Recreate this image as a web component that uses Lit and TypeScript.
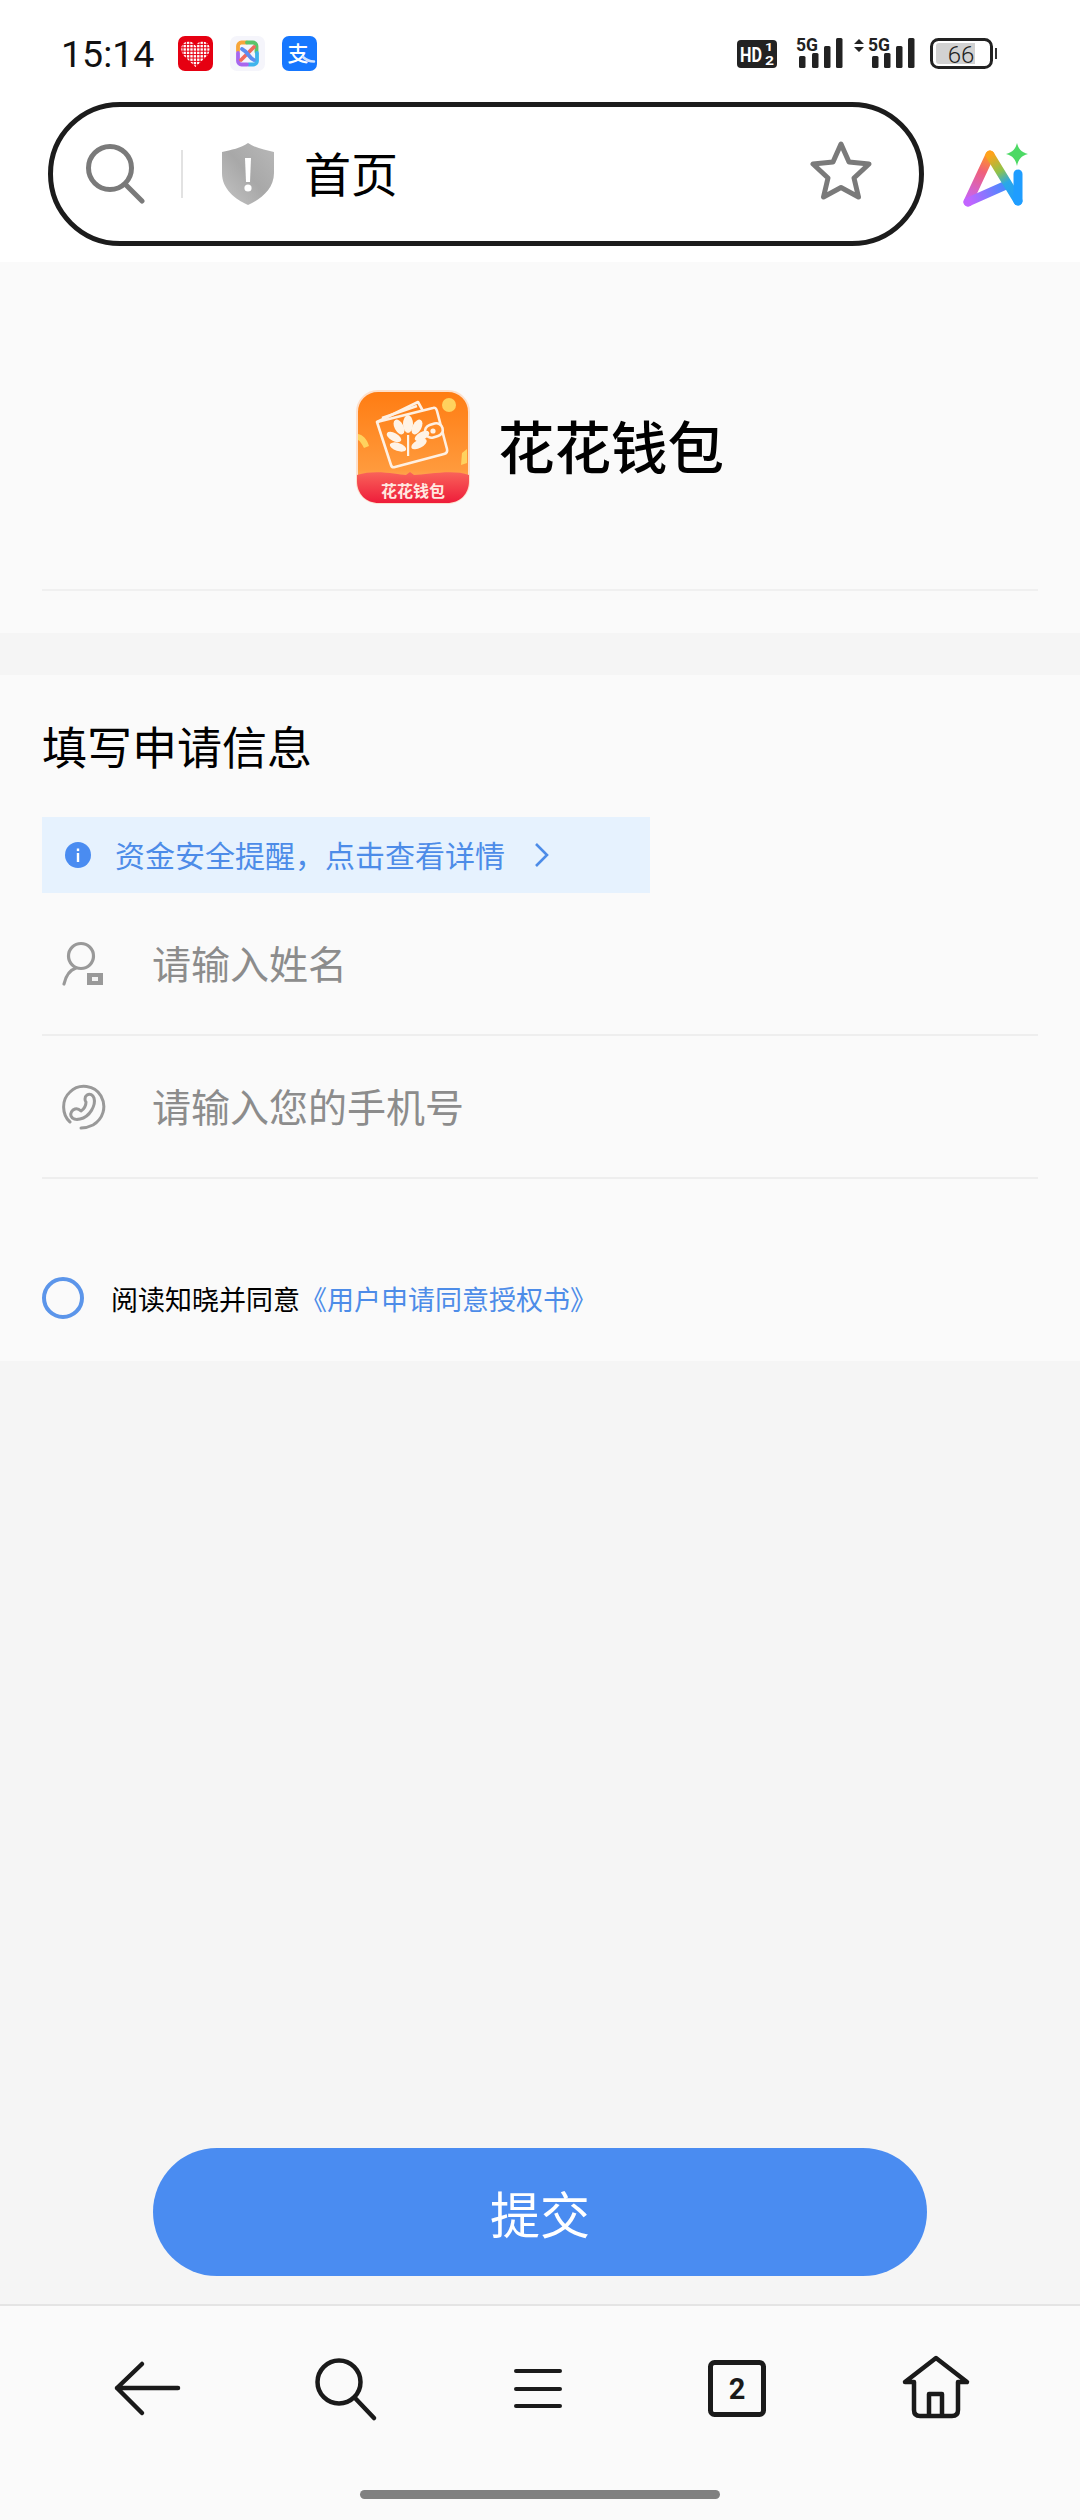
import { LitElement, html, css, svg } from "lit";
import { customElement } from "lit/decorators.js";

const bar = (x: number, top: number, w = 6.5) =>
  svg`<rect x=${x} y=${top} width=${w} height=${34 - top} rx="1.5" fill="#222"/>`;

const heartGrid = () => {
  const out = [];
  for (let v = 5; v < 33; v += 3.4) {
    out.push(svg`<path d="M${v} 4 V32" stroke="#e60012" stroke-width="1"/>`);
    out.push(svg`<path d="M3 ${v} H33" stroke="#e60012" stroke-width="1"/>`);
  }
  return out;
};

@customElement("app-root")
export class AppRoot extends LitElement {
  static styles = css`
    :host { display: block; width: 1080px; height: 2520px; font-family: "Noto Sans CJK SC", Roboto, sans-serif; background: #f5f5f5; color: #000; }
    .page { display: flex; flex-direction: column; height: 2520px; }
    svg { display: block; flex: none; }

    .status { height: 102px; background: #fff; display: flex; padding: 34px 83px 0 61px; box-sizing: border-box; }
    .time { font: 400 37.5px/40px Roboto, sans-serif; width: 117px; color: #111; }
    .apps { display: flex; gap: 17px; align-items: flex-start; margin-top: 2px; }
    .right { margin-left: auto; }

    .toolbar { height: 160px; background: #fff; display: flex; padding-left: 48px; box-sizing: border-box; }
    .pill { width: 876px; height: 144px; box-sizing: border-box; border: 5px solid #1c1c1c; border-radius: 72px; display: flex; align-items: center; padding-left: 32px; }
    .search { margin-bottom: 3px; }
    .divider { width: 2px; height: 48px; background: #e2e2e2; margin: 0 38px 0 36px; }
    .url { font-size: 47px; line-height: 60px; margin-left: 29px; padding-bottom: 5px; flex: 1; color: #000; }
    .star { margin: 0 47px 6px 0; }
    .ai { margin: 41px 0 0 39px; }

    .head { background: #fafafa; height: 371px; box-sizing: border-box; padding: 128px 42px 0; }
    .brand { display: flex; justify-content: center; align-items: center; gap: 28px; height: 114px; padding-bottom: 85px; border-bottom: 2px solid #f0f0f0; }
    .brand-name { font-size: 56.5px; font-weight: 500; line-height: 70px; padding-bottom: 6px; }

    .form { margin-top: 42px; background: #fafafa; height: 686px; box-sizing: border-box; padding: 40px 42px 0; }
    .form-title { font-size: 45px; line-height: 62px; font-weight: 400; margin: 0; }
    .notice { margin-top: 40px; width: 608px; height: 76px; box-sizing: border-box; background: #e6f2fe; display: flex; align-items: center; padding-left: 23px; color: #4d8ce8; font-size: 30px; }
    .notice span { margin-left: 24px; width: 419px; padding-bottom: 2px; white-space: nowrap; }
    .row { height: 143px; box-sizing: border-box; border-bottom: 2px solid #eeeeee; display: flex; align-items: center; padding-left: 20px; color: #8c8c8c; font-size: 39px; }
    .row span { margin-left: 46px; padding-bottom: 3px; }
    .agree { display: flex; align-items: center; margin-top: 98px; font-size: 27px; line-height: 41px; }
    .radio { width: 42px; height: 42px; box-sizing: border-box; border: 4px solid #5b95ea; border-radius: 50%; margin-right: 27px; }
    .link { color: #4d8ce8; }

    .spacer { flex: 1; }
    .submit { align-self: center; width: 774px; height: 128px; margin: 0 0 28px; border: none; border-radius: 64px; background: #4a8cf1; color: #fff; font: 400 50px "Noto Sans CJK SC", sans-serif; }

    .nav { height: 216px; box-sizing: border-box; background: #fafafa; border-top: 2px solid #e4e4e4; position: relative; }
    .nav-row { display: grid; grid-template-columns: repeat(5, 197.5px); padding: 42px 0 0 49.5px; }
    .nav-row svg { justify-self: center; }
    .handle { position: absolute; left: 360px; bottom: 21px; width: 360px; height: 9px; border-radius: 5px; background: #808080; }
  `;

  render() {
    return html`<div class="page">
      <div class="status">
        <div class="time">15:14</div>
        <div class="apps">
          <svg width="35" height="35" viewBox="0 0 35 35">
            <rect width="35" height="35" rx="7" fill="#e60012"/>
            <path d="M17.5 31 L6 20 C1 14 3 5.500 10.500 5.500 C14 5.500 16 7.500 17.5 10 C19 7.500 21 5.500 24.500 5.500 C32 5.500 34 14 29 20 Z" fill="#fff"/>
            ${heartGrid()}
          </svg>
          <svg width="35" height="35" viewBox="0 0 35 35">
            <rect width="35" height="35" rx="7" fill="#f5f5fb"/>
            <g fill="none" stroke-width="3.800" stroke-linecap="round">
              <path d="M8 15 V10 a3.500 3.500 0 0 1 3.500-3.500 h5" stroke="#f7a63a"/>
              <path d="M17 6.500 h6 a3.500 3.500 0 0 1 3.500 3.500 v6" stroke="#5ac46a"/>
              <path d="M27 17 v8 a3.500 3.500 0 0 1 -3.500 3.500 h-5" stroke="#3fb4ec"/>
              <path d="M17 28.500 h-5.500 a3.500 3.500 0 0 1 -3.500-3.500 v-8" stroke="#a866ee"/>
              <path d="M11 24 L24 11" stroke="#ef6b5d"/>
              <path d="M12 13 C18 16 19 22 24 24" stroke="#5c8df0"/>
            </g>
          </svg>
          <svg width="35" height="35" viewBox="0 0 35 35">
            <rect width="35" height="35" rx="7" fill="#1677ff"/>
            <text x="16" y="25" text-anchor="middle" font-size="21" font-weight="500" fill="#fff" font-family="Noto Sans CJK SC">支</text>
            <path d="M21 21 C24 24 28 25.500 32 25.500" fill="none" stroke="#cfe2ff" stroke-width="2.500" stroke-linecap="round"/>
          </svg>
        </div>
        <svg class="right" width="260" height="36" viewBox="0 0 260 36" font-family="Roboto, sans-serif">
          <rect x="0" y="6" width="40" height="28" rx="4" fill="#222"/>
          <text x="3" y="27.500" font-size="21" font-weight="700" fill="#fff" textLength="22" lengthAdjust="spacingAndGlyphs">HD</text>
          <text x="28" y="17" font-size="11" font-weight="700" fill="#fff" textLength="8" lengthAdjust="spacingAndGlyphs">1</text>
          <text x="28" y="30.500" font-size="12" font-weight="700" fill="#fff" textLength="9" lengthAdjust="spacingAndGlyphs">2</text>
          <text x="59" y="17" font-size="19" font-weight="700" fill="#222" textLength="22" lengthAdjust="spacingAndGlyphs">5G</text>
          ${bar(62, 22)}${bar(75, 19)}${bar(87, 12)}${bar(99, 4)}
          <path d="M117 10 L122 5 L127 10 Z M117 13 L122 18 L127 13 Z" fill="#222"/>
          <text x="131" y="17" font-size="19" font-weight="700" fill="#222" textLength="22" lengthAdjust="spacingAndGlyphs">5G</text>
          ${bar(135, 22)}${bar(147, 19)}${bar(159, 12)}${bar(171, 4)}
          <rect x="194.500" y="5.500" width="60" height="28" rx="7" fill="#fff" stroke="#222" stroke-width="3"/>
          <path d="M199 12 a3 3 0 0 1 3-3 H238 V30 H202 a3 3 0 0 1 -3-3 Z" fill="#d2d2d2"/>
          <text x="224" y="28.500" text-anchor="middle" font-size="24" font-weight="300" fill="#222">66</text>
          <rect x="258" y="14" width="2.500" height="11" fill="#333"/>
        </svg>
      </div>

      <div class="toolbar">
        <div class="pill">
          <svg class="search" width="60" height="62" viewBox="0 0 60 62" fill="none" stroke="#7a7a7a" stroke-width="5" stroke-linecap="round">
            <circle cx="25" cy="26" r="21.500"/>
            <path d="M41 43 L57 59"/>
          </svg>
          <div class="divider"></div>
          <svg width="54" height="62" viewBox="0 0 54 62">
            <defs>
              <linearGradient id="sh" x1="0" y1="1" x2="1" y2="0">
                <stop offset="0" stop-color="#c4c4c4"/><stop offset="0.5" stop-color="#a8a8a8"/><stop offset="1" stop-color="#b8b8b8"/>
              </linearGradient>
            </defs>
            <path d="M27 0 C34 5 44 7 53 9 V30 C53 46 40 56 27 62 C14 56 1 46 1 30 V9 C10 7 20 5 27 0 Z" fill="url(#sh)"/>
            <path d="M24 15 h6 l-1 24 h-4 Z" fill="#fff"/>
            <circle cx="27" cy="45" r="3.600" fill="#fff"/>
          </svg>
          <div class="url">首页</div>
          <svg class="star" width="62" height="60" viewBox="0 0 62 60" fill="none" stroke="#7a7a7a" stroke-width="5" stroke-linejoin="round">
            <path d="M31 3 L39 21 L59 23 L44 37 L48.500 56 L31 46.500 L13.500 56 L18 37 L3 23 L23 21 Z"/>
          </svg>
        </div>
        <svg class="ai" width="68" height="68" viewBox="0 0 68 68" fill="none" stroke-width="9" stroke-linecap="round" stroke-linejoin="round">
          <defs>
            <linearGradient id="a1" gradientUnits="userSpaceOnUse" x1="27" y1="12" x2="5" y2="60">
              <stop offset="0" stop-color="#ff9a1f"/><stop offset="0.35" stop-color="#f0607a"/><stop offset="1" stop-color="#c264ff"/>
            </linearGradient>
            <linearGradient id="a2" gradientUnits="userSpaceOnUse" x1="6" y1="58" x2="44" y2="42">
              <stop offset="0" stop-color="#c264ff"/><stop offset="1" stop-color="#3f8cff"/>
            </linearGradient>
            <linearGradient id="a3" gradientUnits="userSpaceOnUse" x1="27" y1="12" x2="55" y2="58">
              <stop offset="0" stop-color="#ffa31a"/><stop offset="0.35" stop-color="#8fc34a"/><stop offset="0.6" stop-color="#2aa8e8"/><stop offset="1" stop-color="#1f9dff"/>
            </linearGradient>
          </defs>
          <path d="M27 12 L5 59" stroke="url(#a1)"/>
          <path d="M5 59 L41 43" stroke="url(#a2)"/>
          <path d="M27 12 L55 58" stroke="url(#a3)"/>
          <path d="M55 31 V58" stroke="#1f9dff"/>
          <path d="M54 0 C55.500 6 58 9 65 11 C58 13 55.500 16 54 23 C52.500 16 50 13 43 11 C50 9 52.500 6 54 0 Z" fill="#4cd964" stroke="none"/>
        </svg>
      </div>

      <div class="head">
        <div class="brand">
          <svg width="114" height="114" viewBox="-1 -1 114 114">
            <defs>
              <linearGradient id="lo" x1="0" y1="0" x2="0" y2="1">
                <stop offset="0" stop-color="#ff7c12"/><stop offset="0.7" stop-color="#ff9a3c"/><stop offset="1" stop-color="#ffc79a"/>
              </linearGradient>
              <linearGradient id="lr" x1="0" y1="0" x2="0" y2="1">
                <stop offset="0" stop-color="#f9635a"/><stop offset="1" stop-color="#ee1c3a"/>
              </linearGradient>
            </defs>
            <rect x="0" y="0" width="112" height="112" rx="21" fill="url(#lo)" stroke="#fde0cc" stroke-width="2"/>
            <path d="M0 84 C20 78 40 84 49 84 L53 81 L57 84 C70 84 95 78 112 84 V90 C112 103 103 112 90 112 H22 C9 112 0 103 0 90 Z" fill="url(#lr)"/>
            <circle cx="92" cy="14" r="7" fill="#ffd25e"/>
            <path d="M1 43 C6 44 10 48 12 55 L7 57 C5 53 3 50 1 49 Z" fill="#ffd25e"/>
            <path d="M110 58 L105 62 L104 74 L110 72 Z" fill="#ffd25e"/>
            <g fill="none" stroke="#fff0e2" stroke-width="2.600" stroke-linejoin="round">
              <path d="M20 31 L76 17 Q79 16 80 20 L90 58 Q91 62 87 63 L38 76 Q35 77 34 74 L20 31 Z"/>
              <path d="M20 31 L61 11 L66 20"/>
              <path d="M25 27 L60 15"/>
              <rect x="68" y="33" width="18" height="13" rx="6.500" transform="rotate(-16 77 40)" fill="#ff8a24"/>
            </g>
            <circle cx="76" cy="40" r="2.600" fill="#fff0e2"/>
            <g fill="#fff3e6">
              <ellipse cx="51" cy="33" rx="5" ry="9"/>
              <ellipse cx="42" cy="36" rx="4.500" ry="8" transform="rotate(-28 42 36)"/>
              <ellipse cx="60" cy="36" rx="4.500" ry="8" transform="rotate(28 60 36)"/>
              <ellipse cx="37" cy="46" rx="4" ry="8" transform="rotate(-62 37 46)"/>
              <ellipse cx="65" cy="45" rx="4" ry="8" transform="rotate(62 65 45)"/>
              <ellipse cx="41" cy="56" rx="4" ry="8.500" transform="rotate(-72 41 56)"/>
              <ellipse cx="62" cy="53" rx="4" ry="8.500" transform="rotate(62 62 53)"/>
              <rect x="50" y="44" width="2.200" height="21"/>
            </g>
            <text x="56" y="106" text-anchor="middle" font-size="16" font-weight="700" fill="#ffe9e0" font-family="Noto Sans CJK SC">花花钱包</text>
          </svg>
          <div class="brand-name">花花钱包</div>
        </div>
      </div>

      <div class="form">
        <h2 class="form-title">填写申请信息</h2>
        <div class="notice">
          <svg width="26" height="26" viewBox="0 0 26 26">
            <circle cx="13" cy="13" r="13" fill="#4a8cf1"/>
            <rect x="11.800" y="11" width="2.400" height="9" fill="#fff"/>
            <rect x="11.800" y="6.500" width="2.400" height="2.600" fill="#fff"/>
          </svg>
          <span>资金安全提醒，点击查看详情</span>
          <svg width="16" height="26" viewBox="0 0 16 26" fill="none" stroke="#4d8ce8" stroke-width="2.600">
            <path d="M2 2 L13 13 L2 24"/>
          </svg>
        </div>
        <div class="row">
          <svg width="44" height="46" viewBox="0 0 44 46" fill="none">
            <circle cx="19" cy="15" r="12.500" stroke="#999" stroke-width="3.200"/>
            <path d="M2 43 C4 34 8 29 14 27" stroke="#999" stroke-width="3.200" stroke-linecap="round"/>
            <rect x="25" y="32" width="16" height="12" fill="#999"/>
            <rect x="30" y="36" width="6" height="4" fill="#f3f3f3"/>
          </svg>
          <span>请输入姓名</span>
        </div>
        <div class="row">
          <svg width="44" height="46" viewBox="0 0 44 46" fill="none" stroke="#999" stroke-width="3">
            <path d="M8 38 C0 31 -1 16 8 8 C17 -1 33 1 39 12 C45 23 41 35 31 41 C27 43 23 44 19 44" stroke-linecap="round"/>
            <path d="M25 11 C28 9 31 11 32 14 C34 21 28 33 18 35 C14 36 10 35 9 32 C8 29 10 26 13 25 C16 24 18 26 19 27 C22 25 24 21 24 18 C23 17 22 13 25 11 Z" stroke-linejoin="round"/>
          </svg>
          <span>请输入您的手机号</span>
        </div>
        <div class="agree">
          <div class="radio"></div>
          <div>阅读知晓并同意<span class="link">《用户申请同意授权书》</span></div>
        </div>
      </div>

      <div class="spacer"></div>
      <button class="submit">提交</button>

      <div class="nav">
        <div class="nav-row">
          <svg width="80" height="80" viewBox="0 0 80 80" fill="none" stroke="#1a1a1a" stroke-width="4.500" stroke-linecap="round" stroke-linejoin="round">
            <path d="M34 16 L9 40 L34 65 M9 40 H70"/>
          </svg>
          <svg width="80" height="80" viewBox="0 0 80 80" fill="none" stroke="#1a1a1a" stroke-width="4.500" stroke-linecap="round">
            <circle cx="33" cy="34" r="21.500"/>
            <path d="M49 50 L68 70"/>
          </svg>
          <svg width="80" height="80" viewBox="0 0 80 80" fill="none" stroke="#1a1a1a" stroke-width="4" stroke-linecap="round">
            <path d="M13 23 H57 M13 41 H57 M13 58 H57"/>
          </svg>
          <svg width="80" height="80" viewBox="0 0 80 80">
            <rect x="9.500" y="14.500" width="53" height="52" rx="4" fill="none" stroke="#1a1a1a" stroke-width="5"/>
            <text x="36" y="51" text-anchor="middle" font-size="29" font-weight="700" fill="#1a1a1a" font-family="Roboto, sans-serif">2</text>
          </svg>
          <svg width="80" height="80" viewBox="0 0 80 80" fill="none" stroke="#1a1a1a" stroke-width="4.500" stroke-linecap="round" stroke-linejoin="round">
            <path d="M16 34 H7 L38 10 L69 34 H60 V62 Q60 68 54 68 H22 Q16 68 16 62 Z M31 68 V46 H44 V68"/>
          </svg>
        </div>
        <div class="handle"></div>
      </div>
    </div>`;
  }
}
